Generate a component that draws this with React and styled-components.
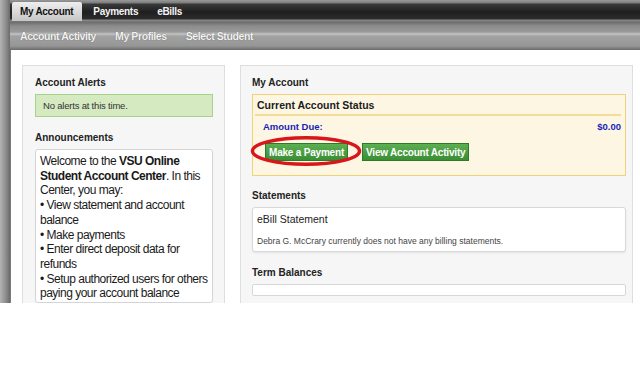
import styled, { createGlobalStyle } from "styled-components";

const GlobalStyle = createGlobalStyle`
  html, body {
    margin: 0;
    padding: 0;
    background: #ffffff;
    font-family: "Liberation Sans", Arial, sans-serif;
  }
`;

const App = () => {
  return (
    <>
      <GlobalStyle />
      <Frame>
        <SideStrip />
        <Main>
          <TabBar>
            <Tab active>My Account</Tab>
            <Tab>Payments</Tab>
            <Tab>eBills</Tab>
          </TabBar>
          <SubNav>
            <SubLink>Account Activity</SubLink>
            <SubLink>My Profiles</SubLink>
            <SubLink>Select Student</SubLink>
          </SubNav>
          <Content>
            <Panel width="203px" left="12px">
              <Label>Account Alerts</Label>
              <AlertBox>No alerts at this time.</AlertBox>
              <Label top="15px">Announcements</Label>
              <NewsBox>
                Welcome to the <b>VSU Online</b>
                <br />
                <b>Student Account Center</b>. In this
                <br />
                Center, you may:
                <br />• View statement and account
                <br />
                balance
                <br />• Make payments
                <br />• Enter direct deposit data for
                <br />
                refunds
                <br />• Setup authorized users for others
                <br />
                paying your account balance
              </NewsBox>
            </Panel>
            <Panel width="393px" left="11px">
              <Label>My Account</Label>
              <StatusBox>
                <StatusHead>Current Account Status</StatusHead>
                <DueRow>
                  <span>Amount Due:</span>
                  <span>$0.00</span>
                </DueRow>
                <ButtonRow>
                  <PayWrap>
                    <GreenButton>Make a Payment</GreenButton>
                    <Circle viewBox="0 0 114 32">
                      <ellipse
                        cx="57"
                        cy="16"
                        rx="54.5"
                        ry="13.5"
                        fill="none"
                        stroke="#d9161c"
                        strokeWidth="3.5"
                      />
                    </Circle>
                  </PayWrap>
                  <GreenButton>View Account Activity</GreenButton>
                </ButtonRow>
              </StatusBox>
              <Label top="14px">Statements</Label>
              <WhiteBox>
                <BillTitle>eBill Statement</BillTitle>
                <BillNote>
                  Debra G. McCrary currently does not have any billing
                  statements.
                </BillNote>
              </WhiteBox>
              <Label top="15px">Term Balances</Label>
              <EmptyBox />
            </Panel>
          </Content>
        </Main>
      </Frame>
    </>
  );
};

export default App;

const Frame = styled.div`
  width: 640px;
  height: 303px;
  display: flex;
  overflow: hidden;
`;

const SideStrip = styled.div`
  width: 10px;
  flex-shrink: 0;
  background: linear-gradient(to right, #b4b4b4, #8c8c8c 60%, #6a6a6a);
`;

const Main = styled.div`
  flex: 1;
  display: flex;
  flex-direction: column;
  min-width: 0;
`;

const TabBar = styled.div`
  height: 22px;
  box-sizing: border-box;
  display: flex;
  align-items: flex-end;
  padding: 0 0 1px 2px;
  background: linear-gradient(
    to bottom,
    #9a9a9a 0px,
    #7a7a7a 3px,
    #3a3a3a 4px,
    #1f1f1f 12px,
    #2c2c2c 19px,
    #8a8a8a 20px,
    #6e6e6e 22px
  );
`;

const Tab = styled.div`
  height: 19px;
  box-sizing: border-box;
  padding: 0 ${(p) => (p.active ? "9px" : "11px")} 0 8px;
  margin-right: ${(p) => (p.active ? "3px" : "0")};
  display: flex;
  align-items: center;
  font-size: 10px;
  font-weight: bold;
  letter-spacing: -0.3px;
  color: ${(p) => (p.active ? "#111" : "#f4f4f4")};
  background: ${(p) =>
    p.active ? "linear-gradient(to bottom, #eeeeee, #c6c6c6)" : "transparent"};
  border-radius: 2px 2px 0 0;
`;

const SubNav = styled.div`
  height: 28px;
  box-sizing: border-box;
  display: flex;
  align-items: center;
  gap: 19px;
  padding: 0 0 0 10px;
  background: linear-gradient(
    to bottom,
    #6c6c6c 0px,
    #8c8c8c 4px,
    #9a9a9a 10px,
    #c4c4c4 12px,
    #a2a2a2 14px,
    #969696 24px,
    #6a6a6a 28px
  );
`;

const SubLink = styled.div`
  font-size: 10.5px;
  font-weight: bold;
  letter-spacing: -0.4px;
  color: #f2f2f2;
  text-shadow: 0 0 1px #555;
`;

const Content = styled.div`
  flex: 1;
  min-height: 0;
  display: flex;
  align-items: stretch;
  gap: 15px;
  padding: 15px 0 0 11px;
  background: #ffffff;
  border-left: 1px solid #7a7a7a;
  overflow: hidden;
`;

const Panel = styled.div`
  width: ${(p) => p.width};
  flex-shrink: 0;
  box-sizing: border-box;
  padding: 11px 6px 0 ${(p) => p.left};
  background: #f6f6f6;
  border: 1px solid #dedede;
  border-bottom: none;
  display: flex;
  flex-direction: column;
`;

const Label = styled.div`
  font-size: 10px;
  font-weight: bold;
  color: #222;
  margin: ${(p) => p.top || "0"} 0 5px 0;
  line-height: 12px;
`;

const AlertBox = styled.div`
  height: 23px;
  margin-right: 5px;
  box-sizing: border-box;
  display: flex;
  align-items: center;
  padding-left: 7px;
  font-size: 9.5px;
  letter-spacing: -0.2px;
  color: #333;
  background: #d6eac2;
  border: 1px solid #a9d18e;
`;

const NewsBox = styled.div`
  flex: 1;
  margin-right: 5px;
  padding: 4px 3px 0 4px;
  background: #ffffff;
  border: 1px solid #d4d4d4;
  border-radius: 3px;
  font-size: 12px;
  line-height: 14.7px;
  letter-spacing: -0.5px;
  color: #1a1a1a;
  white-space: nowrap;
  overflow: hidden;
`;

const StatusBox = styled.div`
  height: 82px;
  box-sizing: border-box;
  padding: 1px 4px 0 2px;
  background: #fdf6e2;
  border: 1px solid #f2d276;
`;

const StatusHead = styled.div`
  font-size: 10.5px;
  font-weight: bold;
  color: #1c1c1c;
  height: 18px;
  line-height: 18px;
  padding-left: 2px;
  border-bottom: 2px solid #f3dc9a;
`;

const DueRow = styled.div`
  display: flex;
  justify-content: space-between;
  padding: 5px 0 0 8px;
  font-size: 9.5px;
  font-weight: bold;
  color: #1c1cb8;
`;

const ButtonRow = styled.div`
  display: flex;
  align-items: center;
  gap: 14px;
  padding: 11px 0 0 10px;
`;

const PayWrap = styled.div`
  position: relative;
`;

const GreenButton = styled.div`
  height: 18px;
  box-sizing: border-box;
  padding: 0 3px;
  display: flex;
  align-items: center;
  font-size: 10px;
  font-weight: bold;
  color: #ffffff;
  background: linear-gradient(to bottom, #5cb052, #3a8e33);
  border: 1px solid #2f7a2a;
  letter-spacing: -0.2px;
`;

const Circle = styled.svg`
  position: absolute;
  left: -15px;
  top: -8px;
  width: 112px;
  height: 32px;
  overflow: visible;
  pointer-events: none;
`;

const WhiteBox = styled.div`
  height: 45px;
  box-sizing: border-box;
  padding: 4px 4px 0 4px;
  background: #ffffff;
  border: 1px solid #d8d8d8;
  border-radius: 3px;
  box-shadow: 0 1px 2px rgba(0, 0, 0, 0.08);
`;

const BillTitle = styled.div`
  font-size: 10.5px;
  color: #222;
  line-height: 14px;
`;

const BillNote = styled.div`
  margin-top: 10px;
  font-size: 8.5px;
  color: #444;
`;

const EmptyBox = styled.div`
  height: 10px;
  background: #ffffff;
  border: 1px solid #d8d8d8;
  border-radius: 2px;
`;
